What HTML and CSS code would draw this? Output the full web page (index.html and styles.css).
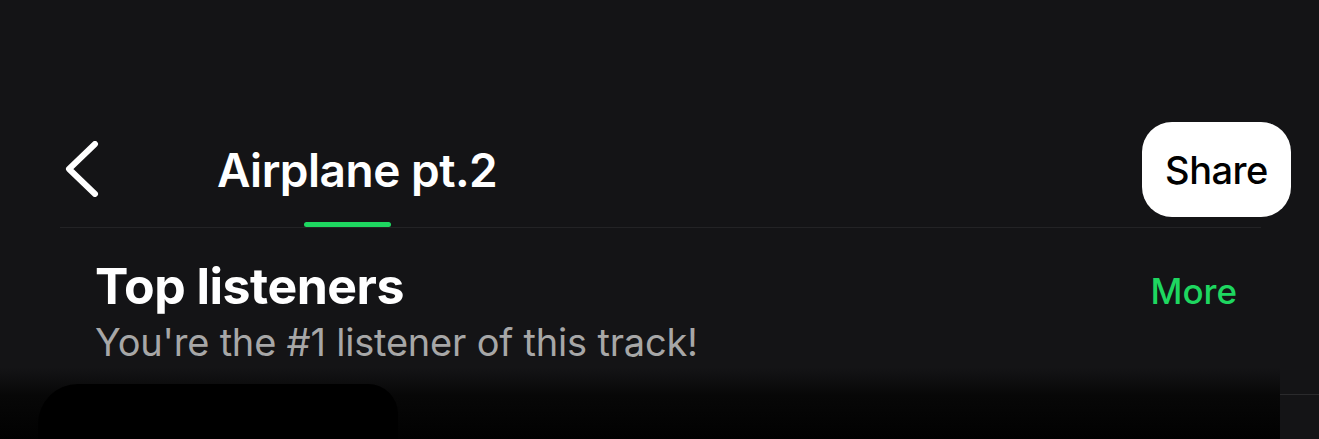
FILE: index.html
```html
<!DOCTYPE html>
<html>
<head>
    <title>Airplane pt.2</title>
    <link rel="stylesheet" href="styles.css">
</head>
<body>
    <div class="screen">
        <div class="topbar">
            <button class="back">
                <svg width="40" height="56" viewBox="0 0 40 56">
                    <path d="M33 3 L7 28 L33 53" fill="none" stroke="#fff" stroke-width="6" stroke-linecap="round" stroke-linejoin="round"/>
                </svg>
            </button>
            <h1 class="title">Airplane pt.2</h1>
            <button class="share">Share</button>
        </div>

        <div class="tabs">
            <div class="tab-indicator"></div>
        </div>

        <div class="section">
            <div class="section-head">
                <h2>Top listeners</h2>
                <a class="more" href="#">More</a>
            </div>
            <p class="subtitle">You're the #1 listener of this track!</p>
        </div>

        <div class="media">
            <div class="media-shape"></div>
        </div>
    </div>
</body>
</html>
```

FILE: styles.css
```css
body {
    margin: 0;
    background: #141416;
    font-family: Inter, "Liberation Sans", sans-serif;
    color: #fff;
    overflow: hidden;
}
.screen {
    padding-top: 122px;
}
.topbar {
    display: flex;
    align-items: center;
    height: 95px;
    padding: 0 28px 0 62px;
}
.back {
    background: none;
    border: none;
    padding: 0;
    width: 40px;
    height: 56px;
    margin-top: -2px;
}
.title {
    margin: 0 0 0 115px;
    font-size: 46px;
    font-weight: 600;
    letter-spacing: -0.5px;
    flex: 1;
}
.share {
    background: #fff;
    color: #000;
    border: none;
    border-radius: 30px;
    width: 149px;
    height: 95px;
    font-family: inherit;
    font-size: 38px;
    font-weight: 500;
    letter-spacing: -0.5px;
}
.tabs {
    margin: 5px 58px 0 60px;
    border-bottom: 1px solid #232325;
}
.tab-indicator {
    margin-left: 244px;
    width: 87px;
    height: 5px;
    border-radius: 3px;
    background: #1ed760;
}
.section {
    padding: 30px 82px 0 95px;
}
.section-head {
    display: flex;
    justify-content: space-between;
    align-items: baseline;
}
.section h2 {
    margin: 0;
    font-size: 50px;
    font-weight: 700;
    letter-spacing: -0.5px;
    line-height: 56px;
}
.more {
    color: #1ed760;
    text-decoration: none;
    font-size: 35px;
    font-weight: 500;
}
.subtitle {
    margin: 6px 0 0;
    color: #a7a7a7;
    font-size: 38px;
    line-height: 44px;
    letter-spacing: -0.2px;
}
.media {
    margin-top: 4px;
    width: 1280px;
    height: 80px;
    background: linear-gradient(#141416, #070707 28px, #000);
    position: relative;
}
.media::after {
    content: "";
    position: absolute;
    left: 1280px;
    top: 26px;
    width: 40px;
    height: 1px;
    background: #2a2a2c;
}
.media-shape {
    position: absolute;
    left: 38px;
    top: 16px;
    width: 360px;
    height: 70px;
    background: #000;
    border-radius: 40px 30px 0 0;
}
```
